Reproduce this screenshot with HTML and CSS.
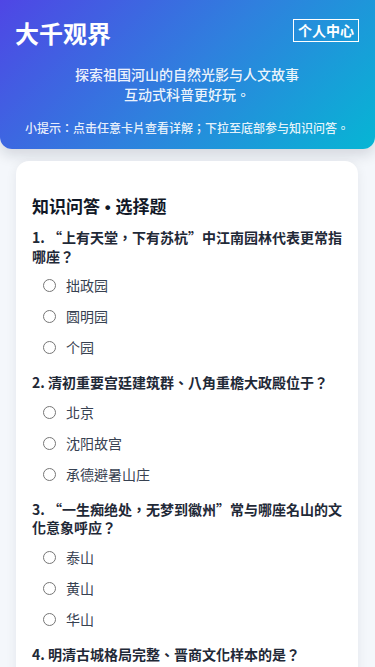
FILE: index.html
```html
<!DOCTYPE html>
<html lang="zh-TW">
<head>
<meta charset="utf-8">
<meta name="viewport" content="width=device-width, initial-scale=1">
<title>大千观界</title>
<link rel="stylesheet" href="styles.css">
</head>
<body>
<header class="hero">
  <div class="hero-top">
    <h1 class="brand">大千观界</h1>
    <button class="profile-btn" type="button">个人中心</button>
  </div>
  <p class="hero-sub">探索祖国河山的自然光影与人文故事<br>互动式科普更好玩。</p>
  <p class="hero-tip">小提示：点击任意卡片查看详解；下拉至底部参与知识问答。</p>
</header>

<main class="page">
  <section class="card quiz">
    <h2 class="quiz-title">知识问答<span class="sep"> • </span>选择题</h2>

    <div class="question">
      <p class="q-text">1. “上有天堂，下有苏杭”中江南园林代表更常指哪座？</p>
      <label class="option"><input type="radio" name="q1"><span>拙政园</span></label>
      <label class="option"><input type="radio" name="q1"><span>圆明园</span></label>
      <label class="option"><input type="radio" name="q1"><span>个园</span></label>
    </div>

    <div class="question">
      <p class="q-text">2. 清初重要宫廷建筑群、八角重檐大政殿位于？</p>
      <label class="option"><input type="radio" name="q2"><span>北京</span></label>
      <label class="option"><input type="radio" name="q2"><span>沈阳故宫</span></label>
      <label class="option"><input type="radio" name="q2"><span>承德避暑山庄</span></label>
    </div>

    <div class="question">
      <p class="q-text">3. “一生痴绝处，无梦到徽州”常与哪座名山的文化意象呼应？</p>
      <label class="option"><input type="radio" name="q3"><span>泰山</span></label>
      <label class="option"><input type="radio" name="q3"><span>黄山</span></label>
      <label class="option"><input type="radio" name="q3"><span>华山</span></label>
    </div>

    <div class="question">
      <p class="q-text">4. 明清古城格局完整、晋商文化样本的是？</p>
      <label class="option"><input type="radio" name="q4"><span>平遥古城</span></label>
      <label class="option"><input type="radio" name="q4"><span>丽江古城</span></label>
      <label class="option"><input type="radio" name="q4"><span>凤凰古城</span></label>
    </div>
  </section>
</main>
</body>
</html>
```

FILE: styles.css
```css
* { box-sizing: border-box; }

html, body {
  margin: 0;
  padding: 0;
}

body {
  background: #f4f7fb;
  font-family: "Noto Sans CJK TC", "Noto Sans CJK SC", sans-serif;
  color: #1f2937;
}

.hero {
  background: linear-gradient(135deg, #4f46e5 0%, #2f80de 50%, #06b6d4 100%);
  color: #fff;
  padding: 16px 16px 13px 15px;
  border-radius: 0 0 12px 12px;
  box-shadow: 0 6px 14px rgba(15, 23, 42, 0.14);
}

.hero-top {
  display: flex;
  justify-content: space-between;
  align-items: flex-start;
}

.brand {
  margin: 0;
  font-size: 24px;
  line-height: 34px;
  font-weight: 700;
}

.profile-btn {
  margin: 3px 0 0 0;
  background: transparent;
  color: #fff;
  border: 1.5px solid #fff;
  font-family: "Noto Sans CJK TC", "Noto Sans CJK SC", sans-serif;
  font-size: 14px;
  font-weight: 700;
  line-height: 18px;
  padding: 1px 4px 2px;
  border-radius: 0;
}

.hero-sub {
  margin: 15px 0 0;
  text-align: center;
  font-size: 14px;
  line-height: 19.5px;
  font-weight: 500;
  color: rgba(255, 255, 255, 0.92);
}

.hero-tip {
  margin: 15px 0 0;
  text-align: center;
  font-size: 12px;
  line-height: 17px;
  font-weight: 500;
  color: rgba(255, 255, 255, 0.9);
}

.page {
  padding: 12px 17px 24px 16px;
}

.card {
  background: #fff;
  border-radius: 13px;
  box-shadow: 0 2px 12px rgba(15, 23, 42, 0.07);
  padding: 16px;
}

.quiz-title {
  margin: 17px 0 10px;
  font-size: 17px;
  line-height: 24px;
  height: 24px;
  font-weight: 700;
  color: #111827;
}

.quiz-title .sep {
  font-family: "Liberation Sans", sans-serif;
  line-height: 1;
}

.question {
  margin-bottom: 10px;
}

.q-text {
  margin: 0 0 5px;
  font-size: 14px;
  line-height: 18.5px;
  font-weight: 700;
  color: #1f2937;
}

.option {
  display: flex;
  align-items: center;
  gap: 10px;
  padding: 6px 0 6px 11px;
  font-size: 14px;
  line-height: 19px;
  color: #374151;
  cursor: pointer;
}

.option input {
  margin: 0;
  width: 13px;
  height: 13px;
  flex: none;
}
```
